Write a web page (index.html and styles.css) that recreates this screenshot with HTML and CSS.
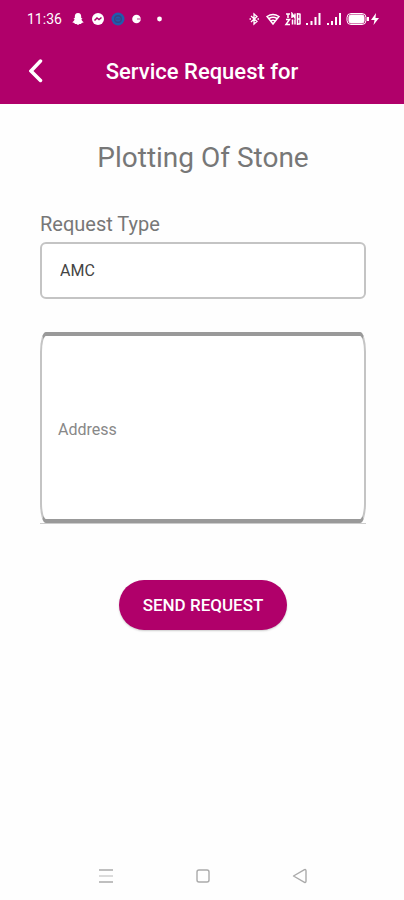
FILE: index.html
```html
<!DOCTYPE html>
<html lang="en">
<head>
<meta charset="utf-8">
<meta name="viewport" content="width=device-width, initial-scale=1">
<title>Service Request</title>
<link rel="stylesheet" href="styles.css">
</head>
<body>
<header class="top">
  <div class="status">
    <div class="status-left">
      <time class="clock">11:36</time>
      <svg width="92" height="14" viewBox="0 0 92 14" aria-hidden="true">
        <path fill="#fff" d="M6 1C3.700 1 2.800 2.700 2.800 4.500V6L1.500 6.500L2.600 7.500C2.200 8.700 1.300 9.500.2 10.200L2.300 11L3 12H4.500L6 13L7.500 12H9L9.700 11L11.800 10.200C10.700 9.500 9.800 8.700 9.400 7.500L10.500 6.500L9.200 6V4.500C9.200 2.700 8.300 1 6 1Z"/>
        <circle cx="26" cy="7" r="6" fill="#fff"/>
        <path d="M22.500 8.500L25 6L27 7.500L29.500 5.500" fill="none" stroke="#b0006a" stroke-width="1.500"/>
        <circle cx="46" cy="7" r="6.500" fill="#1f5cae"/>
        <circle cx="46" cy="7" r="3.300" fill="none" stroke="#394284" stroke-width="1.400"/>
        <path d="M44 7h4" stroke="#394284"/>
        <circle cx="64.500" cy="7" r="4.300" fill="#fff"/>
        <path d="M65 7h4" stroke="#d783b6" stroke-width="1.500"/>
        <circle cx="87.500" cy="7" r="2.400" fill="#fff"/>
      </svg>
    </div>
    <svg width="132" height="14" viewBox="0 0 132 14" fill="none" stroke="#fff" aria-hidden="true">
      <path stroke-width="1.300" d="M3 4L9 9.500L6 12V2L9 4.500L3 10M1.500 7H3M9.500 7H11"/>
      <path stroke-width="1.500" d="M19 4.500Q25 .5 31 4.500L25 12ZM21 6.500Q25 4 29 6.500M23 9Q25 7.500 27 9"/>
      <path stroke-width="1.500" d="M38 2H42M40 2V6M38 7.500H41.500L38 12.500H42M44 6V1.500L47 6V1.500M44.500 7.500V12.500M47 7.500V12.500M49.500 1V13M52 1.500V12.500M50 2H52M50 7H52M50 12H52"/>
      <path stroke-width="2" d="M59 11V13M63.500 9V13M67.500 5V13M71.500 1V13M80 11V13M84 9V13M88 5V13M92 1V13"/>
      <rect x="99" y="1.500" width="19" height="11" rx="4"/>
      <rect x="101" y="3" width="15" height="8" rx="2" fill="#fff"/>
      <path stroke-width="2" d="M120 5V9"/>
      <path fill="#fff" stroke="none" d="M128 1L123 8H126.500L125.500 13L131 6H127.500Z"/>
    </svg>
  </div>
  <div class="bar">
    <button class="back" type="button" aria-label="Back">
      <svg width="14" height="24" viewBox="0 0 14 24" fill="none" stroke="#fff" stroke-width="3.500" stroke-linecap="round" aria-hidden="true"><path d="M11.500 2L2 12L11.500 21.500"/></svg>
    </button>
    <h1 class="bar-title">Service Request for</h1>
  </div>
</header>
<main class="content">
  <h2 class="heading">Plotting Of Stone</h2>
  <form class="form">
    <label class="label" for="type">Request Type</label>
    <select class="select" id="type"><option>AMC</option></select>
    <div class="address-field">
      <textarea class="address" aria-label="Address" placeholder="Address"></textarea>
    </div>
    <button class="send" type="button">SEND REQUEST</button>
  </form>
</main>
<nav class="nav">
  <button class="nav-btn" type="button" aria-label="Recent apps"><svg width="16" height="16" viewBox="0 0 16 16" fill="none" stroke="#aaa" stroke-width="1.400"><path d="M1 2H15M1 14H15"/><path stroke="#ccc" d="M1 8H15"/></svg></button>
  <button class="nav-btn" type="button" aria-label="Home"><svg width="16" height="16" viewBox="0 0 16 16" fill="none" stroke="#aaa" stroke-width="1.400"><rect x="2" y="2" width="12" height="12" rx="2"/></svg></button>
  <button class="nav-btn" type="button" aria-label="Back"><svg width="16" height="16" viewBox="0 0 16 16" fill="none" stroke="#aaa" stroke-width="1.400" stroke-linejoin="round"><path d="M1.500 8L12.500 1.700Q14 1 14 3V13Q14 15 12.500 14.300Z"/></svg></button>
</nav>
</body>
</html>
```
FILE: styles.css
```css
* {
  box-sizing: border-box;
}

body {
  margin: 0;
  min-height: 100vh;
  display: flex;
  flex-direction: column;
  background: #fefefe;
  color: #777;
  font-family: Roboto, "Liberation Sans", sans-serif;
}

button {
  border: 0;
  padding: 0;
  background: none;
  font-family: inherit;
}

svg {
  display: block;
}

.top {
  background: #b0006a;
  color: #fff;
}

.status {
  display: flex;
  align-items: center;
  justify-content: space-between;
  height: 38px;
  padding: 0 24px 0 27px;
}

.status-left {
  display: flex;
  align-items: center;
  gap: 10px;
}

.clock {
  font-size: 14px;
}

.bar {
  display: grid;
  grid-template-columns: 28px 1fr 28px;
  align-items: center;
  height: 66px;
  padding: 0 22px;
}

.back {
  display: flex;
  justify-content: center;
}

.bar-title {
  margin: 0;
  text-align: center;
  font-size: 22px;
  font-weight: 500;
}

.content {
  flex: 1;
  padding: 36px 38px 0 40px;
}

.heading {
  margin: 0;
  text-align: center;
  font-size: 28px;
  line-height: 36px;
  font-weight: 400;
}

.form {
  display: flex;
  flex-direction: column;
}

.label {
  margin-top: 36px;
  font-size: 20px;
  line-height: 24px;
}

.select {
  appearance: none;
  height: 57px;
  margin-top: 6px;
  padding: 0 18px;
  border: 2px solid #c4c4c4;
  border-radius: 6px;
  background: #fff;
  color: #444;
  font-family: inherit;
  font-size: 16px;
}

.address-field {
  display: flex;
  margin-top: 33px;
  border-bottom: 1px solid #ccc;
}

.address {
  flex: 1;
  min-width: 0;
  height: 191px;
  padding: 84px 16px 0;
  border: solid #c4c4c4;
  border-width: 4px 2px;
  border-top-color: #999;
  border-bottom-color: #999;
  border-radius: 6px / 20px;
  background: #fff;
  color: #444;
  font-family: inherit;
  font-size: 16px;
  line-height: 20px;
  resize: none;
}

.address::placeholder {
  color: #888;
}

.send {
  align-self: center;
  height: 50px;
  margin-top: 56px;
  padding: 0 24px;
  border-radius: 25px;
  background: #b0006a;
  box-shadow: 0 1px 2px #ccc;
  color: #fff;
  font-size: 17px;
  font-weight: 500;
}

.nav {
  display: flex;
  justify-content: space-between;
  padding: 0 96px 16px 98px;
}
```
